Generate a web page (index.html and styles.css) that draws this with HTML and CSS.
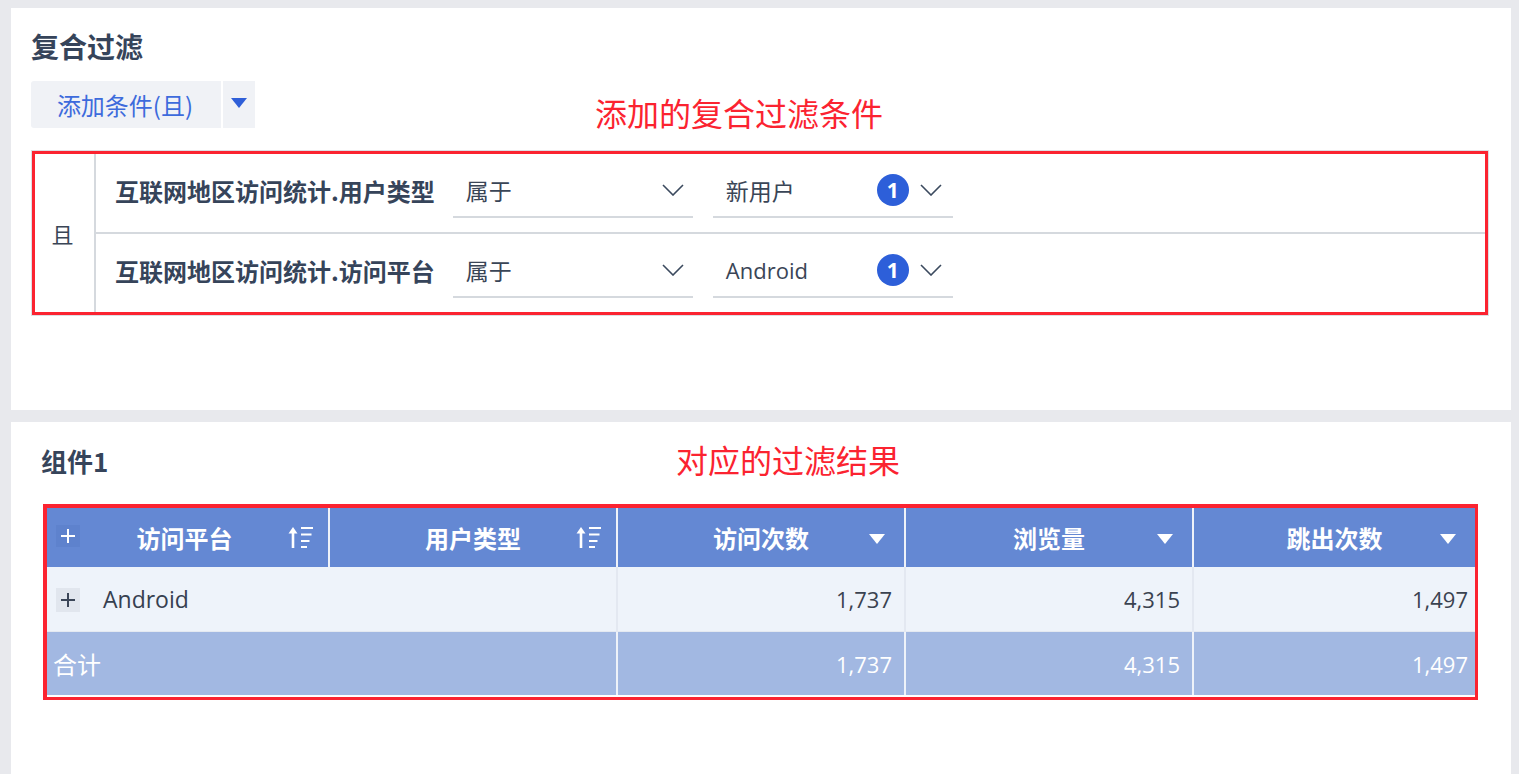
FILE: index.html
```html
<!DOCTYPE html>
<html lang="zh-CN">
<head>
<meta charset="utf-8">
<title>复合过滤</title>
<link rel="stylesheet" href="styles.css">
</head>
<body>
<div class="page">
  <section class="panel panel-filter">
    <h2 class="title title-lg">复合过滤</h2>
    <div class="add-row">
      <button class="add-btn">添加条件(且)</button>
      <button class="add-drop"><svg width="16" height="10" viewBox="0 0 16 10"><polygon points="0,0 16,0 8,10" fill="#2f5fd8"/></svg></button>
    </div>
    <div class="note note-filter">添加的复合过滤条件</div>
    <div class="filter-box">
      <div class="logic">且</div>
      <div class="conds">
        <div class="cond">
          <div class="field">互联网地区访问统计.用户类型</div>
          <div class="select op"><span class="sel-text">属于</span><svg class="chev" width="22" height="12" viewBox="0 0 22 12"><polyline points="1,1 11,11 21,1" fill="none" stroke="#3b4a5e" stroke-width="1.6"/></svg></div>
          <div class="select val"><span class="sel-text">新用户</span><span class="badge">1</span><svg class="chev" width="22" height="12" viewBox="0 0 22 12"><polyline points="1,1 11,11 21,1" fill="none" stroke="#3b4a5e" stroke-width="1.6"/></svg></div>
        </div>
        <div class="cond">
          <div class="field">互联网地区访问统计.访问平台</div>
          <div class="select op"><span class="sel-text">属于</span><svg class="chev" width="22" height="12" viewBox="0 0 22 12"><polyline points="1,1 11,11 21,1" fill="none" stroke="#3b4a5e" stroke-width="1.6"/></svg></div>
          <div class="select val"><span class="sel-text latin">Android</span><span class="badge">1</span><svg class="chev" width="22" height="12" viewBox="0 0 22 12"><polyline points="1,1 11,11 21,1" fill="none" stroke="#3b4a5e" stroke-width="1.6"/></svg></div>
        </div>
      </div>
    </div>
  </section>

  <section class="panel panel-table">
    <h2 class="title">组件1</h2>
    <div class="note note-table">对应的过滤结果</div>
    <div class="table-wrap">
      <div class="grid">
        <div class="th th-dim"><span class="plus plus-head"><svg width="14" height="14" viewBox="0 0 14 14"><path d="M7 0V14M0 7H14" stroke="#fff" stroke-width="2"/></svg></span><span class="th-label">访问平台</span><svg class="sort" width="26" height="24" viewBox="0 0 26 24"><path d="M5 23V5" stroke="#fff" stroke-width="2.6"/><polygon points="0.5,8.5 5,2 9.5,8.5" fill="#fff"/><path d="M13 3H25M13 9.5H23.5M13 16H21.5M13 22H19" stroke="#fff" stroke-width="2"/></svg></div>
        <div class="th th-dim"><span class="th-label">用户类型</span><svg class="sort" width="26" height="24" viewBox="0 0 26 24"><path d="M5 23V5" stroke="#fff" stroke-width="2.6"/><polygon points="0.5,8.5 5,2 9.5,8.5" fill="#fff"/><path d="M13 3H25M13 9.5H23.5M13 16H21.5M13 22H19" stroke="#fff" stroke-width="2"/></svg></div>
        <div class="th th-meas"><span class="th-label">访问次数</span><svg class="tri" width="16" height="10" viewBox="0 0 16 10"><polygon points="0,0 16,0 8,10" fill="#fff"/></svg></div>
        <div class="th th-meas"><span class="th-label">浏览量</span><svg class="tri" width="16" height="10" viewBox="0 0 16 10"><polygon points="0,0 16,0 8,10" fill="#fff"/></svg></div>
        <div class="th th-meas"><span class="th-label">跳出次数</span><svg class="tri" width="16" height="10" viewBox="0 0 16 10"><polygon points="0,0 16,0 8,10" fill="#fff"/></svg></div>

        <div class="td td-first"><span class="plus plus-row"><svg width="14" height="14" viewBox="0 0 14 14"><path d="M7 0V14M0 7H14" stroke="#3b4658" stroke-width="2"/></svg></span><span class="row-label">Android</span></div>
        <div class="td num">1,737</div>
        <div class="td num">4,315</div>
        <div class="td num last">1,497</div>

        <div class="tt tt-first">合计</div>
        <div class="tt num">1,737</div>
        <div class="tt num">4,315</div>
        <div class="tt num last">1,497</div>
      </div>
    </div>
  </section>
</div>
</body>
</html>
```

FILE: styles.css
```css
* { box-sizing: border-box; }

html, body {
  margin: 0;
  padding: 0;
}

body {
  background: #e8e9ed;
  font-family: "Open Sans", "Noto Sans CJK SC", sans-serif;
  color: #3a4556;
  overflow: hidden;
}

.page {
  display: flex;
  flex-direction: column;
  gap: 12px;
  padding: 8px 8px 0 11px;
}

.panel {
  position: relative;
  background: #fff;
}

.panel-filter {
  height: 402px;
  padding: 20px 20px 0 20px;
}

.panel-table {
  height: 352px;
  padding: 21px 30px 0 30px;
}

.title {
  margin: 0;
  font-family: "Noto Sans CJK SC", sans-serif;
  font-size: 26px;
  line-height: 36px;
  font-weight: 700;
  color: #36445a;
}

.title-lg {
  font-size: 28px;
}

.add-row {
  display: flex;
  gap: 2px;
  margin-top: 17px;
}

.add-btn {
  width: 190px;
  height: 47px;
  border: 0;
  border-radius: 3px 0 0 3px;
  background: #f0f2f6;
  color: #3d6bdc;
  font-family: "Noto Sans CJK SC", sans-serif;
  font-size: 24px;
  padding: 0 2px 0 0;
}

.add-drop {
  width: 32px;
  height: 47px;
  border: 0;
  background: #f0f2f6;
  display: flex;
  align-items: center;
  justify-content: center;
  padding: 0 0 4px;
}

.note {
  position: absolute;
  font-family: "Noto Sans CJK SC", sans-serif;
  font-size: 32px;
  line-height: 40px;
  color: #fb2330;
  white-space: nowrap;
}

.note-filter { left: 584px; top: 84px; }
.note-table  { left: 665px; top: 17px; }

.filter-box {
  display: flex;
  margin-top: 23px;
  margin-left: 1px;
  width: 1456px;
  height: 164px;
  border: 3px solid #fb2330;
  box-shadow: 0 0 0 1px #dcdfe4;
}

.logic {
  width: 61px;
  flex: none;
  display: flex;
  align-items: center;
  justify-content: center;
  border-right: 2px solid #d5d9de;
  font-family: "Noto Sans CJK SC", sans-serif;
  font-size: 22px;
  color: #3a4556;
  padding-right: 4px;
}

.conds {
  flex: 1;
  display: flex;
  flex-direction: column;
}

.cond {
  flex: 1;
  display: flex;
  align-items: center;
  gap: 19px;
  padding-left: 19px;
}

.cond + .cond {
  border-top: 2px solid #d5d9de;
}

.field {
  font-family: "Noto Sans CJK SC", sans-serif;
  font-size: 24px;
  font-weight: 700;
  color: #36445a;
  white-space: nowrap;
  margin-right: -1px;
  margin-bottom: 5px;
}

.select {
  width: 240px;
  height: 48px;
  display: flex;
  align-items: center;
  border-bottom: 2px solid #d5d9de;
  padding: 0 9px 6px 13px;
  margin-top: 2px;
}

.select.val {
  padding-right: 11px;
  margin-left: 1px;
}

.sel-text {
  flex: 1;
  font-family: "Noto Sans CJK SC", sans-serif;
  font-size: 23px;
  color: #3a4556;
}

.sel-text.latin {
  font-family: "Open Sans", "Noto Sans CJK SC", sans-serif;
  font-size: 22px;
}

.badge {
  width: 32px;
  height: 32px;
  border-radius: 50%;
  background: #2d5fd9;
  color: #fff;
  font-family: "Open Sans", sans-serif;
  font-weight: 700;
  font-size: 21px;
  line-height: 32px;
  text-align: center;
  margin-right: 11px;
}

.chev { flex: none; display: block; }

/* table */
.table-wrap {
  margin-top: 25px;
  margin-left: 2px;
  width: 1435px;
  border: 4px solid #fb2330;
  border-right-width: 3px;
  border-bottom-width: 3px;
  background: #fff;
  padding-bottom: 2px;
}

.grid {
  display: grid;
  grid-template-columns: 281px 286px 286px 286px 281px;
  grid-template-rows: 59px 65px 63px;
  column-gap: 2px;
  background: #eef2f9;
}

.th {
  position: relative;
  background: #6488d3;
  display: flex;
  align-items: center;
  justify-content: center;
  font-family: "Noto Sans CJK SC", sans-serif;
  font-size: 24px;
  font-weight: 700;
  color: #fff;
}

.th-label { line-height: 1; }

.plus {
  position: absolute;
  left: 9px;
  width: 24px;
  height: 22px;
  display: flex;
  align-items: center;
  justify-content: center;
}

.plus-head {
  background: #5e82cd;
  top: 17px;
}

.plus-row {
  background: #e1e6ee;
  top: 21px;
  height: 24px;
}

.th:first-child .th-label {
  margin-left: -6px;
}

.sort {
  position: absolute;
  right: 14px;
  top: 17px;
}

.tri {
  position: absolute;
  right: 19px;
  top: 26px;
}

.td {
  position: relative;
  background: #eef3fa;
  border-bottom: 1px solid #e4e9f1;
  font-size: 22px;
  color: #3a4250;
  display: flex;
  align-items: center;
}

.td-first,
.tt-first {
  grid-column: span 2;
}

.td + .td { box-shadow: -2px 0 0 #e3e8f1; }

.row-label {
  padding-left: 56px;
  font-size: 23px;
  color: #364050;
}

.num {
  justify-content: flex-end;
  padding-right: 12px;
}

.num.last {
  padding-right: 7px;
}

.tt {
  background: #a2b8e2;
  color: #fff;
  font-size: 22px;
  display: flex;
  align-items: center;
}

.tt-first {
  font-family: "Noto Sans CJK SC", sans-serif;
  font-size: 24px;
  padding-left: 6px;
}
```
